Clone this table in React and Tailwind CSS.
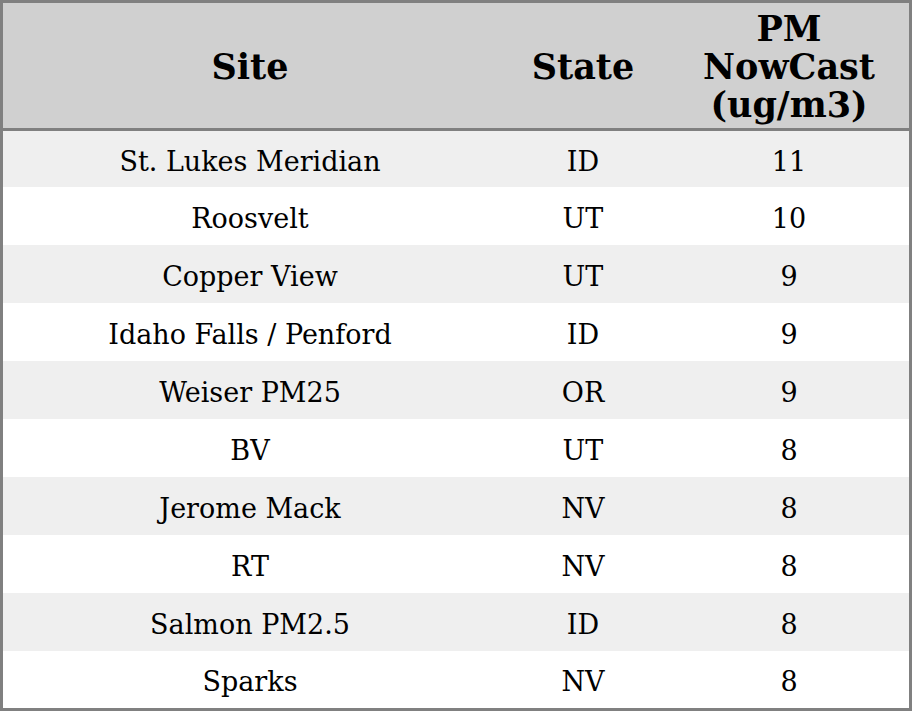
import React from "react";

const rows = [
  ["St. Lukes Meridian", "ID", "11"],
  ["Roosvelt", "UT", "10"],
  ["Copper View", "UT", "9"],
  ["Idaho Falls / Penford", "ID", "9"],
  ["Weiser PM25", "OR", "9"],
  ["BV", "UT", "8"],
  ["Jerome Mack", "NV", "8"],
  ["RT", "NV", "8"],
  ["Salmon PM2.5", "ID", "8"],
  ["Sparks", "NV", "8"],
];

const heights = ["h-[56px]", "h-[58px]", "h-[58px]", "h-[58px]", "h-[58px]", "h-[58px]", "h-[58px]", "h-[58px]", "h-[58px]", "h-[57px]"];

export default function App() {
  return (
    <div className="w-[912px] h-[711px] bg-white border-[3px] border-[#808080] flex flex-col text-black [font-family:'DejaVu_Serif',serif]">
      <div className="h-[125px] bg-[#d0d0d0] flex items-center pt-[2px] font-bold text-[35px] leading-[38px] text-center">
        <div className="w-[494px]">Site</div>
        <div className="w-[172px]">State</div>
        <div className="w-[240px]">PM<br />NowCast<br />(ug/m3)</div>
      </div>
      <div className="h-[3px] bg-[#808080]" />
      {rows.map((r, i) => (
        <div
          key={i}
          className={`${heights[i]} ${i % 2 === 0 ? "bg-[#efefef]" : "bg-white"} flex items-center pt-[4px] text-center text-[27px] leading-none`}
        >
          <div className="w-[494px]">{r[0]}</div>
          <div className="w-[172px]">{r[1]}</div>
          <div className="w-[240px]">{r[2]}</div>
        </div>
      ))}
    </div>
  );
}
